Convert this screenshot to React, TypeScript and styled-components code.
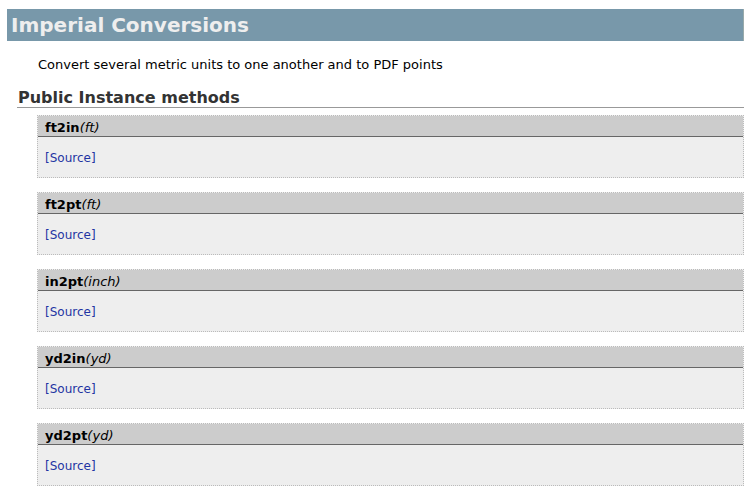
import React from "react";
import styled, { createGlobalStyle } from "styled-components";

const Global = createGlobalStyle`
  html, body { margin: 0; padding: 0; background: #fff; }
  body { font-family: "DejaVu Sans", Verdana, sans-serif; color: #000; }
`;

const Page = styled.div`
  padding: 9px 9px 0 7px;
`;

const TitleBar = styled.h1`
  margin: 0;
  height: 32px;
  box-sizing: border-box;
  background: #7898aa;
  border-right: 1px solid #9aa;
  color: #eeeeee;
  font-size: 20px;
  font-weight: bold;
  line-height: 32px;
  padding-left: 4px;
  width: 737px;
`;

const Description = styled.p`
  margin: 15px 0 0 31px;
  font-size: 13px;
  line-height: 18px;
`;

const SectionTitle = styled.h2`
  margin: 14px 0 0 10px;
  font-size: 16px;
  font-weight: bold;
  color: #333;
  line-height: 20px;
  padding-left: 1px;
  border-bottom: 1px solid #999;
  height: 19px;
`;

const MethodList = styled.div`
  display: flex;
  flex-direction: column;
  gap: 14px;
  margin: 7px 0 0 30px;
`;

const Method = styled.div`
  border: 1px dotted #bbb;
  background: #eeeeee;
  height: 63px;
  box-sizing: border-box;
  display: flex;
  flex-direction: column;
`;

const MethodHead = styled.div`
  background: #cccccc;
  border-bottom: 1px solid #666;
  height: 21px;
  box-sizing: border-box;
  padding-left: 7px;
  font-size: 13px;
  line-height: 24px;
  overflow: hidden;
  color: #000;
`;

const Name = styled.b`
  font-weight: bold;
`;

const Args = styled.i`
  font-style: italic;
`;

const MethodBody = styled.div`
  padding: 13px 0 0 7px;
  font-size: 12px;
  line-height: 16px;
`;

const SourceLink = styled.a`
  color: #1f35a3;
  text-decoration: none;
`;

const methods = [
  ["ft2in", "ft"],
  ["ft2pt", "ft"],
  ["in2pt", "inch"],
  ["yd2in", "yd"],
  ["yd2pt", "yd"],
];

export default function App() {
  return (
    <Page>
      <Global />
      <TitleBar>Imperial Conversions</TitleBar>
      <Description>Convert several metric units to one another and to PDF points</Description>
      <SectionTitle>Public Instance methods</SectionTitle>
      <MethodList>
        {methods.map(([n, a]) => (
          <Method key={n}>
            <MethodHead>
              <Name>{n}</Name>
              <Args>({a})</Args>
            </MethodHead>
            <MethodBody>
              <SourceLink href="#">[Source]</SourceLink>
            </MethodBody>
          </Method>
        ))}
      </MethodList>
    </Page>
  );
}
